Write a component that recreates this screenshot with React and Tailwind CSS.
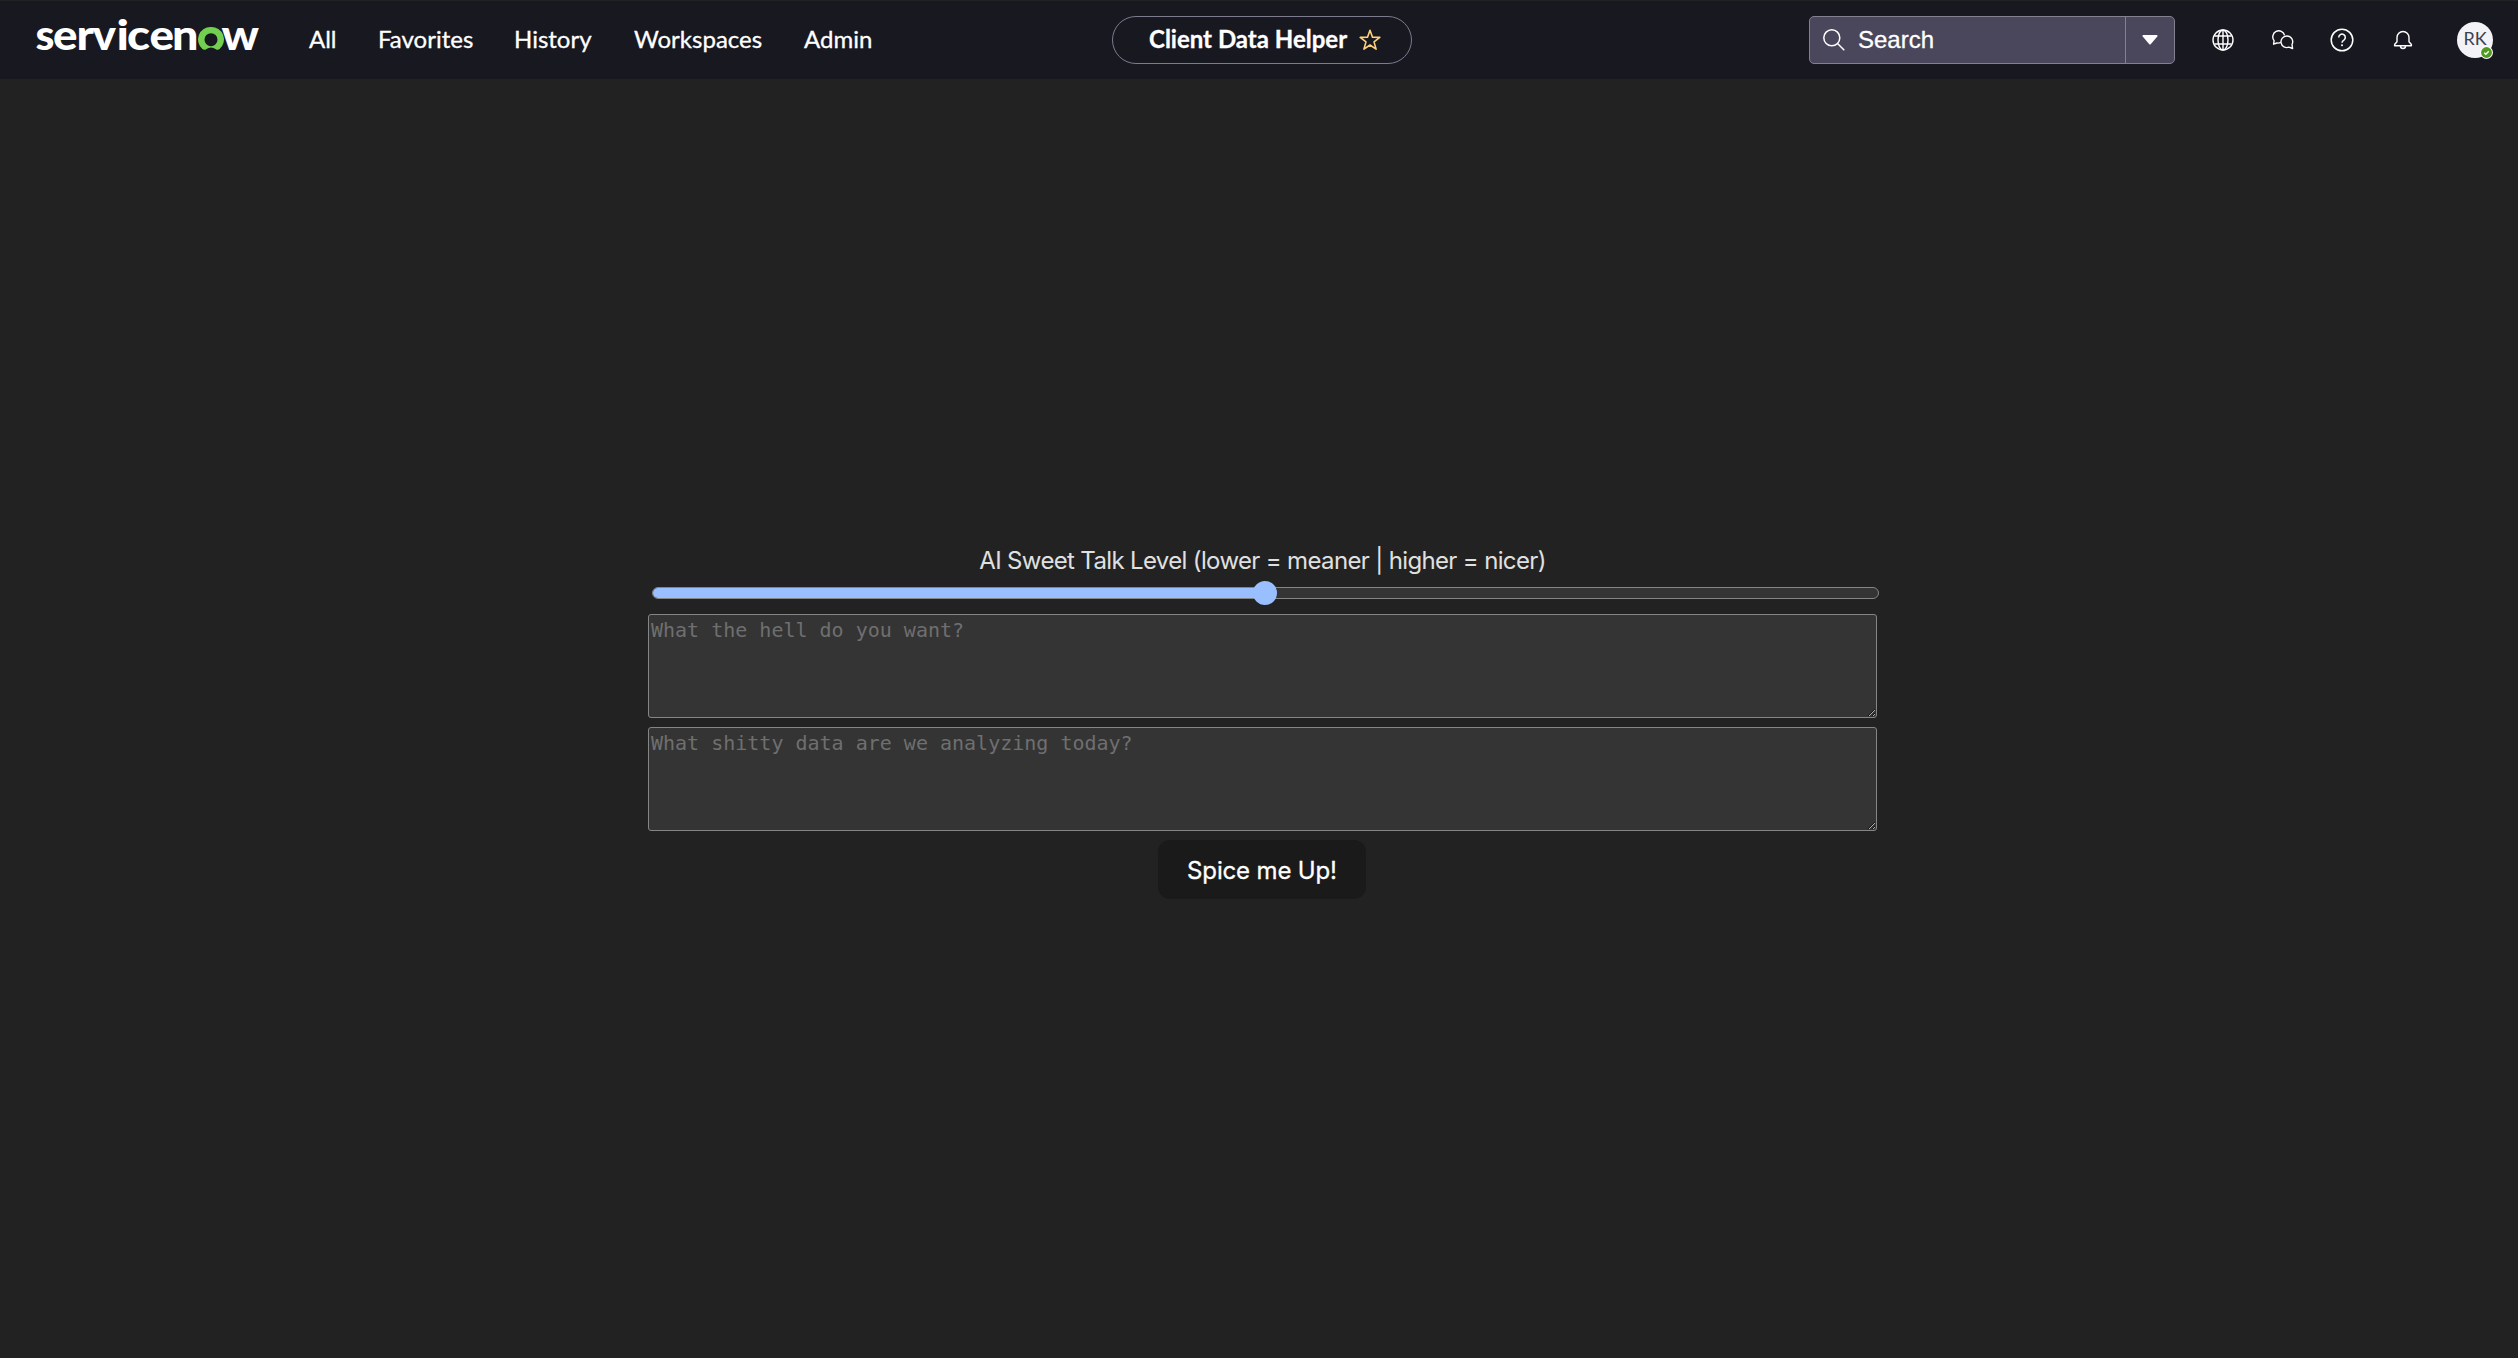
const NAV = [
  { label: 'All', cls: 'w-[69px]' },
  { label: 'Favorites', cls: 'w-[136px]' },
  { label: 'History', cls: 'w-[120px]' },
  { label: 'Workspaces', cls: 'w-[170px]' },
  { label: 'Admin', cls: 'w-[80px]' },
]

// letter, x position, advance width
const LETTERS = [
  ['s', 35.5, 19],
  ['e', 53, 24.5],
  ['r', 76.5, 17.5],
  ['v', 92.5, 23.5],
  ['i', 116.5, 12.5],
  ['c', 127, 23],
  ['e', 149.5, 24.5],
  ['n', 172, 26.5],
  ['w', 221.5, 37.5],
]

function Logo() {
  return (
    <svg width="260" height="80" viewBox="0 0 260 80" className="shrink-0" aria-label="servicenow">
      <g fill="#fff" fontFamily="Lato" fontWeight="900" fontSize="42.5">
        {LETTERS.map(([c, x, w], i) => (
          <text key={i} x={x} y="49.5" textLength={w} lengthAdjust="spacingAndGlyphs">{c}</text>
        ))}
      </g>
      <path
        d="M211 27a12.500 12.500 0 0 0-8.600 22c1 1 2.500 1.100 3.700.3a8.500 8.500 0 0 1 9.800 0c1.200.8 2.700.7 3.700-.3A12.500 12.500 0 0 0 211 27zm0 19.200a6.500 6.500 0 1 1 0-13 6.500 6.500 0 0 1 0 13z"
        fill="#73cf4f"
      />
    </svg>
  )
}

const Globe = () => (
  <svg width="22" height="22" viewBox="0 0 22 22" fill="none" stroke="#fff" strokeWidth="1.4">
    <circle cx="11" cy="11" r="10" />
    <ellipse cx="11" cy="11" rx="5" ry="10" />
    <path d="M11 1v20M2.300 7h17.400M2.300 15h17.400" />
  </svg>
)
const Chat = () => (
  <svg width="22" height="20" viewBox="0 0 22 20" fill="none" stroke="#fff" strokeWidth="1.400" strokeLinejoin="round">
    <path d="M8.800 12.400A6.300 6.300 0 0 1 4.900 13L1.600 14.200l.5-3.600A6 6 0 1 1 12.600 5.400" />
    <path d="M14.700 6a5.800 5.800 0 0 1 5.300 8.500l.6 4-3.700-1.300A5.800 5.800 0 1 1 14.700 6z" />
  </svg>
)
const Help = () => (
  <svg width="24" height="24" viewBox="0 0 24 24" fill="none" stroke="#fff" strokeWidth="1.500">
    <circle cx="12" cy="12" r="10.800" />
    <path d="M8.700 9.400a3.300 3.300 0 1 1 5.200 2.700c-1.200.8-1.900 1.300-1.900 2.700" />
    <circle cx="12" cy="17.300" r="1" fill="#fff" stroke="none" />
  </svg>
)
const Bell = () => (
  <svg width="20" height="20" viewBox="0 0 20 20" fill="none" stroke="#fff" strokeWidth="1.400" strokeLinejoin="round">
    <path d="M10 1.500a6 6 0 0 0-6 6v4.200L1.600 14.500v1.200h16.800v-1.200L16 11.700V7.500a6 6 0 0 0-6-6z" />
    <path d="M7.500 16a2.500 2.500 0 0 0 5 0" />
  </svg>
)

function Header() {
  return (
    <header className="relative flex h-[79px] items-center border-t border-[#222] bg-[#181821] text-[24px] text-white font-[Lato,sans-serif]">
      <Logo />
      <nav className="-mt-[2px] ml-[49px] flex [-webkit-text-stroke:0.300px_white]">
        {NAV.map((n) => (
          <a key={n.label} className={`${n.cls} shrink-0 whitespace-nowrap`}>{n.label}</a>
        ))}
      </nav>
      <div className="absolute left-[1112px] top-[15px] flex h-12 w-[300px] items-center rounded-full border border-[#7d7b8d] pl-[36px] font-bold">
        <span className="-mt-[2px] w-[210px] whitespace-nowrap [-webkit-text-stroke:0.300px_white]">Client Data Helper</span>
        <svg width="22" height="22" viewBox="0 0 22 22" fill="none" stroke="#ffd27a" strokeWidth="1.600" strokeLinejoin="round">
          <path d="M11 1.200l2.500 7 7.300.2-5.800 4.500 2.100 7.200L11 16l-6.100 4.100L7 12.900 1.200 8.400l7.300-.2z" />
        </svg>
      </div>
      <div className="ml-auto flex items-center">
        <div className="flex h-12 w-[366px] items-center rounded-[5px] border border-[#83818f] bg-[#4a475c]">
          <svg className="ml-[13px]" width="22" height="22" viewBox="0 0 22 22" fill="none" stroke="#fff" strokeWidth="1.500">
            <circle cx="8.800" cy="8.800" r="8" />
            <path d="M14.500 14.500l6.800 6.800" />
          </svg>
          <span className="ml-[13px] grow font-['Liberation_Sans',sans-serif] [-webkit-text-stroke:0.300px_white]">Search</span>
          <div className="flex h-full w-[49px] items-center justify-center border-l border-[#83818f]">
            <svg width="16" height="10" viewBox="0 0 16 10"><path d="M1 0h14q1 .6.300 1.500L8.700 9.300q-.7.600-1.400 0L.7 1.500Q0 .6 1 0z" fill="#fff" /></svg>
          </div>
        </div>
        <div className="ml-[37px] flex w-[22px] justify-center"><Globe /></div>
        <div className="ml-[38px] flex w-[22px] justify-center"><Chat /></div>
        <div className="-mt-[1px] ml-[36px] flex w-[24px] justify-center"><Help /></div>
        <div className="ml-[39px] flex w-[20px] justify-center"><Bell /></div>
        <div className="relative ml-[44px] mr-[25px] flex size-9 items-center justify-center rounded-full bg-[#f3f3f7] text-[18px] text-[#3a4252]">
          <span className="relative -top-[2px]">RK</span>
          <svg className="absolute -bottom-[1px] right-0" width="13" height="13" viewBox="0 0 13 13">
            <circle cx="6.500" cy="6.500" r="6.500" fill="#fff" />
            <circle cx="6.500" cy="6.500" r="5.400" fill="#4f9a1f" />
            <path d="M4.200 6.700l1.600 1.500 3-3" stroke="#fff" strokeWidth="1.500" fill="none" />
          </svg>
        </div>
      </div>
    </header>
  )
}

function Field({ placeholder }) {
  return (
    <textarea
      placeholder={placeholder}
      className="block h-[104px] w-[1229px] resize rounded-[3px] border border-[#858585] bg-[#343434] px-[2px] py-[3px] font-['DejaVu_Sans_Mono',monospace] text-[20px] leading-[24px] text-white placeholder:text-[#6f6f6f] placeholder:opacity-100 [color-scheme:dark]"
    />
  )
}

export default function App() {
  return (
    <div className="flex h-[1358px] w-[2518px] flex-col overflow-hidden bg-[#222]">
      <Header />
      <main className="flex flex-col items-center pt-[464px] pl-[7px] font-[Inter,sans-serif] text-[#e0e0e0]">
        <label className="h-[36px] whitespace-nowrap text-[24px] leading-[36px] tracking-[-0.650px]">
          AI Sweet Talk Level (lower = meaner | higher = nicer)
        </label>
        <div className="relative ml-[6px] mt-[8px] flex h-[12px] w-[1227px] rounded-full border border-[#858585] bg-[#343434]">
          <div className="w-1/2 rounded-l-full bg-[#99bfff]" />
          <div className="absolute -top-[7px] left-[600px] size-6 rounded-full bg-[#99bfff]" />
        </div>
        <div className="mt-[15px] flex flex-col gap-[9px]">
          <Field placeholder="What the hell do you want?" />
          <Field placeholder="What shitty data are we analyzing today?" />
        </div>
        <button className="mr-[1px] mt-[9px] h-[59px] w-[208px] whitespace-nowrap rounded-[12px] bg-[#1a1a1a] pt-[2px] text-[24px] tracking-[-0.150px] text-white [-webkit-text-stroke:0.300px_white]">
          Spice me Up!
        </button>
      </main>
    </div>
  )
}
